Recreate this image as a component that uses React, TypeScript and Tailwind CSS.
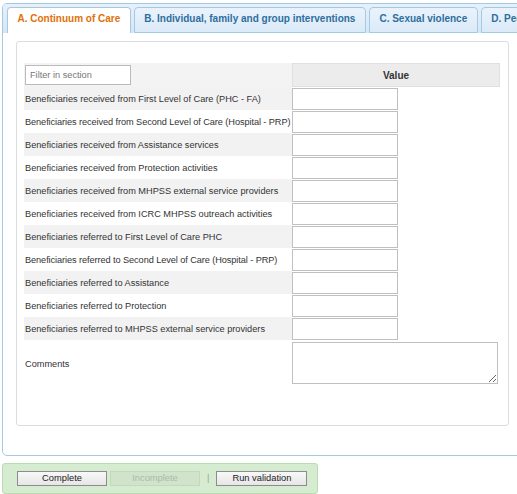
import React from "react";

const rows = [
  "Beneficiaries received from First Level of Care (PHC - FA)",
  "Beneficiaries received from Second Level of Care (Hospital - PRP)",
  "Beneficiaries received from Assistance services",
  "Beneficiaries received from Protection activities",
  "Beneficiaries received from MHPSS external service providers",
  "Beneficiaries received from ICRC MHPSS outreach activities",
  "Beneficiaries referred to First Level of Care PHC",
  "Beneficiaries referred to Second Level of Care (Hospital - PRP)",
  "Beneficiaries referred to Assistance",
  "Beneficiaries referred to Protection",
  "Beneficiaries referred to MHPSS external service providers",
];

const tabs = [
  { label: "A. Continuum of Care", active: true },
  { label: "B. Individual, family and group interventions", active: false },
  { label: "C. Sexual violence", active: false },
  { label: "D. Peer support", active: false },
];

export default function App() {
  return (
    <div className="w-[517px] h-[494px] overflow-hidden bg-white font-['Liberation_Sans',Arial,sans-serif]">
      <div className="pl-[2px] pt-[3px]">
        <div className="w-[521px] rounded-[5px] border border-[#a6c9e2] bg-white">
          <div className="flex h-[29px] items-start gap-[3px] overflow-hidden rounded-t-[4px] bg-gradient-to-b from-[#e6f1fb] to-[#d4e6f6] pl-[4px] pt-[3px]">
            {tabs.map((t) =>
              t.active ? (
                <div
                  key={t.label}
                  className="h-[26px] shrink-0 whitespace-nowrap rounded-t-[4px] border border-b-0 border-[#a6c9e2] bg-white px-[9.5px] pt-[5px] text-[10px] font-bold leading-[12px] text-[#e17009]"
                >
                  {t.label}
                </div>
              ) : (
                <div
                  key={t.label}
                  className="h-[26px] shrink-0 whitespace-nowrap rounded-t-[4px] border border-[#a6c9e2] bg-gradient-to-b from-[#eaf3fc] to-[#dbeaf8] px-[9.5px] pt-[5px] text-[10px] font-bold leading-[12px] text-[#2e6e9e]"
                >
                  {t.label}
                </div>
              )
            )}
          </div>
          <div className="px-[13px] pb-[29px] pt-[8px]">
            <div className="w-[493px] rounded-[3px] border border-[#dddddd] px-[7px] pb-[38px] pt-[21px]">
              <div className="w-[476px] text-[9.2px] text-[#333333]">
                <div className="flex h-[24px]">
                  <div className="w-[268px] bg-[#f3f3f3] pl-px pt-[2px]">
                    <input
                      placeholder="Filter in section"
                      className="box-border h-[20px] w-[106px] border border-[#bbbbbb] bg-white px-[4px] text-[9.2px] text-[#333] outline-none placeholder:text-[#777777]"
                    />
                  </div>
                  <div className="flex w-[208px] items-center justify-center border border-[#e0e0e0] bg-[#ececec] text-[10px] font-bold text-[#333333]">
                    Value
                  </div>
                </div>
                {rows.map((r, i) => (
                  <div key={r} className="flex h-[23px]">
                    <div
                      className={
                        "flex w-[268px] items-center whitespace-nowrap pl-px pt-[2px] " +
                        (i % 2 === 0 ? "bg-[#f2f2f2] " : "bg-white ") +
                        (r.length > 62 ? "tracking-[-0.08px]" : "")
                      }
                    >
                      {r}
                    </div>
                    <div className="relative w-[208px] pt-px">
                      <input className="box-border block h-[22px] w-[106px] border border-[#c0c0c0] bg-white outline-none" />
                    </div>
                  </div>
                ))}
                <div className="flex h-[47px]">
                  <div className="flex w-[268px] items-center pl-px pt-[3px]">Comments</div>
                  <div className="w-[208px] pt-[2px]">
                    <textarea className="box-border block h-[42px] w-[206px] border border-[#c0c0c0] bg-white outline-none" />
                  </div>
                </div>
              </div>
            </div>
          </div>
        </div>
        <div className="mt-[7px] flex h-[31px] w-[316px] items-start gap-[3px] rounded-[3px] border border-[#b9dcb1] bg-[#d6ecd0] pl-[14px] pt-[7px]">
          <button className="h-[15px] w-[90px] border border-[#8c8c8c] bg-gradient-to-b from-[#f8f8f8] to-[#e6e6e6] text-[9.3px] leading-[13px] text-[#222222]">
            Complete
          </button>
          <button
            disabled
            className="h-[15px] w-[90px] border border-[#c3d8bf] bg-[#cfe4cb] text-[9.3px] leading-[13px] text-[#a9bba7]"
          >
            Incomplete
          </button>
          <span className="mx-[4px] text-[9.3px] leading-[15px] text-[#a0a0a0]">|</span>
          <button className="h-[15px] w-[91px] border border-[#8c8c8c] bg-gradient-to-b from-[#f8f8f8] to-[#e6e6e6] text-[9.3px] leading-[13px] text-[#222222]">
            Run validation
          </button>
        </div>
      </div>
    </div>
  );
}
